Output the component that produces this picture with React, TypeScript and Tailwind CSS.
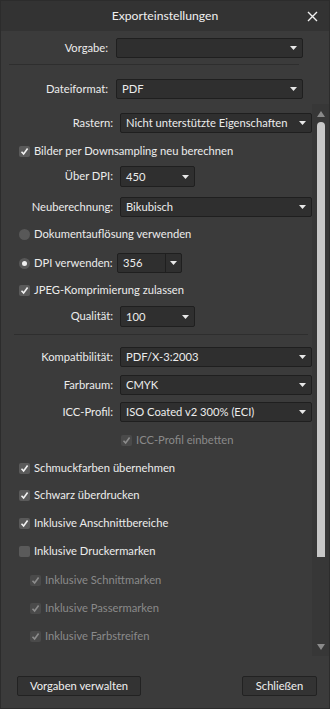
import React from 'react';

const font = { fontFamily: 'Lato, "Noto Sans", sans-serif' };

function Arrow({ color = '#e8e8e8' }: { color?: string }) {
  return (
    <svg width="7" height="4" viewBox="0 0 7 4" className="shrink-0">
      <path d="M0 0 H7 L3.5 4 Z" fill={color} />
    </svg>
  );
}

function Dropdown({ value, width, h = 'h-[20px]' }: { value: string; width: string; h?: string }) {
  return (
    <div
      className={`${width} ${h} flex items-center justify-between pl-[5px] pr-[5px] bg-[#2f2f2f] border border-[#1f1f1f] rounded-[2px] text-[#ececec]`}
    >
      <span className="whitespace-nowrap leading-[16px]">{value}</span>
      <Arrow />
    </div>
  );
}

function Check({ checked, disabled }: { checked: boolean; disabled?: boolean }) {
  return (
    <div
      className={`w-[11px] h-[11px] rounded-[2px] flex items-center justify-center shrink-0 ${
        disabled ? 'bg-[#4a4a4a]' : 'bg-[#5a5a5a]'
      }`}
    >
      {checked && (
        <svg width="9" height="9" viewBox="0 0 9 9">
          <path
            d="M1.5 4.8 L3.6 7 L7.6 1.6"
            fill="none"
            stroke={disabled ? '#8c8c8c' : '#f2f2f2'}
            strokeWidth="1.6"
          />
        </svg>
      )}
    </div>
  );
}

function CheckRow({
  label,
  checked,
  disabled,
  indent = 'pl-[18px]',
  className = '',
}: {
  label: string;
  checked: boolean;
  disabled?: boolean;
  indent?: string;
  className?: string;
}) {
  return (
    <div className={`h-[20px] flex items-center gap-[4px] whitespace-nowrap ${indent} ${className}`}>
      <Check checked={checked} disabled={disabled} />
      <span className={disabled ? 'text-[#8a8a8a]' : 'text-[#ececec]'}>{label}</span>
    </div>
  );
}

function Radio({ selected }: { selected: boolean }) {
  return (
    <div className="w-[11px] h-[11px] rounded-full bg-[#585858] flex items-center justify-center shrink-0">
      {selected && <div className="w-[5px] h-[5px] rounded-full bg-[#f0f0f0]" />}
    </div>
  );
}

function LabelRow({
  label,
  children,
  labelW = 'w-[112px]',
  gap = 'ml-[7px]',
  className = '',
}: {
  label: string;
  children: React.ReactNode;
  labelW?: string;
  gap?: string;
  className?: string;
}) {
  return (
    <div className={`flex items-center ${className}`}>
      <div className={`${labelW} text-right text-[#ececec] shrink-0 whitespace-nowrap`}>{label}</div>
      <div className={gap}>{children}</div>
    </div>
  );
}

function Button({ label, width }: { label: string; width: string }) {
  return (
    <div
      className={`${width} h-[20px] flex items-center justify-center bg-[#333333] border border-[#222222] rounded-[2px] text-[#f0f0f0] whitespace-nowrap`}
    >
      {label}
    </div>
  );
}

export default function App() {
  return (
    <div
      className="w-[330px] h-[709px] bg-[#3b3b3b] border border-[#2c2c2c] flex flex-col text-[11.2px] overflow-hidden"
      style={font}
    >
      {/* title bar */}
      <div className="h-[30px] bg-[#333333] flex items-center justify-center relative shrink-0">
        <span className="text-[12.2px] text-[#f0f0f0]">Exporteinstellungen</span>
        <svg width="11" height="11" viewBox="0 0 11 11" className="absolute right-[11px] top-[10px]">
          <path d="M1 1 L10 10 M10 1 L1 10" stroke="#f0f0f0" strokeWidth="1.4" />
        </svg>
      </div>

      {/* preset */}
      <LabelRow label="Vorgabe:" labelW="w-[107px]" gap="ml-[8px]" className="mt-[7px]">
        <Dropdown value="" width="w-[187px]" />
      </LabelRow>
      <div className="mt-[6px] ml-[8px] w-[290px] h-px bg-[#2e2e2e]" />

      <LabelRow label="Dateiformat:" labelW="w-[107px]" gap="ml-[8px]" className="mt-[14px]">
        <Dropdown value="PDF" width="w-[187px]" />
      </LabelRow>

      {/* scroll area */}
      <div className="mt-[5px] flex flex-1 min-h-0">
        <div className="flex-1 flex flex-col pt-[9px]">
          <LabelRow label="Rastern:">
            <Dropdown value="Nicht unterstützte Eigenschaften" width="w-[192px]" />
          </LabelRow>
          <CheckRow label="Bilder per Downsampling neu berechnen" checked className="mt-[8px]" />
          <LabelRow label="Über DPI:" className="mt-[5px]">
            <Dropdown value="450" width="w-[75px]" h="h-[21px]" />
          </LabelRow>
          <LabelRow label="Neuberechnung:" className="mt-[10px]">
            <Dropdown value="Bikubisch" width="w-[192px]" />
          </LabelRow>
          <div className="h-[20px] mt-[7px] pl-[18px] flex items-center gap-[4px] whitespace-nowrap">
            <Radio selected={false} />
            <span className="text-[#ececec]">Dokumentauflösung verwenden</span>
          </div>
          <div className="h-[20px] mt-[9px] pl-[18px] flex items-center whitespace-nowrap">
            <Radio selected />
            <span className="ml-[4px] w-[83px] text-[#ececec]">DPI verwenden:</span>
            <div className="w-[65px] h-[20px] flex bg-[#2f2f2f] border border-[#1f1f1f] rounded-[2px] text-[#ececec]">
              <div className="flex-1 flex items-center pl-[5px] border-r border-[#1f1f1f]">356</div>
              <div className="w-[15px] flex items-center justify-center">
                <Arrow />
              </div>
            </div>
          </div>
          <CheckRow label="JPEG-Komprimierung zulassen" checked className="mt-[7px]" />
          <LabelRow label="Qualität:" className="mt-[6px]">
            <Dropdown value="100" width="w-[75px]" h="h-[21px]" />
          </LabelRow>
          <div className="mt-[7px] ml-[13px] w-[294px] h-px bg-[#2e2e2e]" />
          <LabelRow label="Kompatibilität:" className="mt-[12px]">
            <Dropdown value="PDF/X-3:2003" width="w-[192px]" />
          </LabelRow>
          <LabelRow label="Farbraum:" className="mt-[8px]">
            <Dropdown value="CMYK" width="w-[192px]" />
          </LabelRow>
          <LabelRow label="ICC-Profil:" className="mt-[7px]">
            <Dropdown value="ISO Coated v2 300% (ECI)" width="w-[192px]" />
          </LabelRow>
          <CheckRow label="ICC-Profil einbetten" checked disabled indent="pl-[120px]" className="mt-[8px]" />
          <CheckRow label="Schmuckfarben übernehmen" checked className="mt-[8px]" />
          <CheckRow label="Schwarz überdrucken" checked className="mt-[7px]" />
          <CheckRow label="Inklusive Anschnittbereiche" checked className="mt-[8px]" />
          <CheckRow label="Inklusive Druckermarken" checked={false} className="mt-[8px]" />
          <CheckRow label="Inklusive Schnittmarken" checked disabled indent="pl-[29px]" className="mt-[9px]" />
          <CheckRow label="Inklusive Passermarken" checked disabled indent="pl-[29px]" className="mt-[8px]" />
          <CheckRow label="Inklusive Farbstreifen" checked disabled indent="pl-[29px]" className="mt-[8px]" />
        </div>

        {/* scrollbar */}
        <div className="w-[17px] bg-[#373737] flex flex-col items-center pt-[7px] pb-[6px] shrink-0">
          <svg width="8" height="6" viewBox="0 0 8 6">
            <path d="M0 6 L4 0 L8 6 Z" fill="#8a8a8a" />
          </svg>
          <div className="mt-[5px] w-[8px] h-[435px] bg-[#c8c8c8] rounded-t-full rounded-b-[3px]" />
          <div className="flex-1" />
          <svg width="8" height="6" viewBox="0 0 8 6">
            <path d="M0 0 L8 0 L4 6 Z" fill="#8a8a8a" />
          </svg>
        </div>
      </div>

      {/* footer */}
      <div className="h-[52px] shrink-0 flex items-start justify-between pl-[16px] pr-[12px] pt-[20px]">
        <Button label="Vorgaben verwalten" width="w-[124px]" />
        <Button label="Schließen" width="w-[75px]" />
      </div>
    </div>
  );
}
